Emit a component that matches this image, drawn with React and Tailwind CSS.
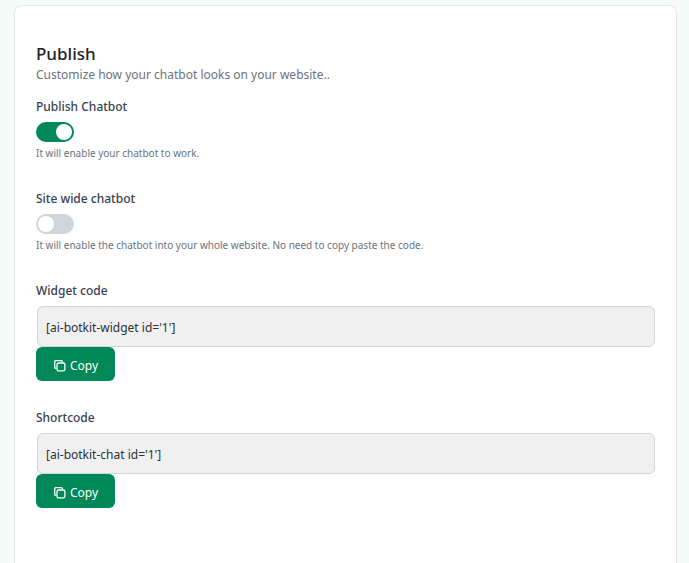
import { useState } from "react";

function Toggle({ id, label, help, defaultChecked }) {
  return (
    <div className="flex flex-col items-start">
      <label htmlFor={id} className="text-[12px] leading-[22px] font-medium text-[#374151]">
        {label}
      </label>
      <input
        id={id}
        type="checkbox"
        role="switch"
        defaultChecked={defaultChecked}
        aria-describedby={`${id}-help`}
        className="mt-1 flex h-5 w-[38px] cursor-pointer appearance-none items-center rounded-full bg-[#d1d5db] px-0.5 before:size-4 before:rounded-full before:bg-white checked:justify-end checked:bg-[#008858]"
      />
      <p id={`${id}-help`} className="mt-0.5 text-[10px] leading-[18px] text-[#6b7280]">
        {help}
      </p>
    </div>
  );
}

function CopyIcon() {
  return (
    <svg viewBox="0 0 12 12" className="size-3" fill="none" stroke="currentColor" strokeWidth="1.3" strokeLinejoin="round" aria-hidden="true">
      <rect x="3" y="3" width="7.9" height="7.9" rx="1.6" />
      <path d="M1.7 8.4A1.1 1.1 0 0 1 .7 7.3V1.9A1.2 1.2 0 0 1 1.9.7h5.4a1.1 1.1 0 0 1 1.1 1" strokeLinecap="round" />
    </svg>
  );
}

function CodeField({ id, label, code }) {
  const [value] = useState(code);
  return (
    <div className="flex flex-col items-start">
      <label htmlFor={id} className="text-[12px] leading-[22px] font-medium text-[#374151]">
        {label}
      </label>
      <div className="mt-1 flex w-full pl-px">
        <input
          id={id}
          type="text"
          readOnly
          value={value}
          className="h-[41px] w-full rounded-md border border-[#d1d5db] bg-[#f0f0f0] px-2 pt-0.5 text-[12px] text-[#2c3338] outline-none"
        />
      </div>
      <button
        type="button"
        onClick={() => navigator.clipboard?.writeText(value)}
        className="flex h-[34px] cursor-pointer items-center gap-1 rounded-md bg-[#008858] pt-1 pr-[17px] pl-[18px] text-[12px] text-white"
      >
        <CopyIcon />
        Copy
      </button>
    </div>
  );
}

export default function App() {
  return (
    <div className="min-h-screen bg-[#f5fbf9] pt-[5px] pr-3 pl-3.5 font-['Noto_Sans','Open_Sans',sans-serif]">
      <main className="min-h-[calc(100vh-5px)] rounded-t-lg border border-b-0 border-[#e5e7eb] bg-white px-[21px] pt-9 pb-12">
        <h1 className="text-[17px] leading-6 font-medium text-[#1d2327]">Publish</h1>
        <p className="text-[12px] leading-[18px] text-[#6b7280]">
          Customize how your chatbot looks on your website..
        </p>
        <form className="mt-3 flex flex-col gap-[26px]" onSubmit={(e) => e.preventDefault()}>
          <Toggle id="publish" label="Publish Chatbot" help="It will enable your chatbot to work." defaultChecked />
          <Toggle
            id="site-wide"
            label="Site wide chatbot"
            help="It will enable the chatbot into your whole website. No need to copy paste the code."
          />
          <CodeField id="widget-code" label="Widget code" code="[ai-botkit-widget id='1']" />
          <CodeField id="shortcode" label="Shortcode" code="[ai-botkit-chat id='1']" />
        </form>
      </main>
    </div>
  );
}
